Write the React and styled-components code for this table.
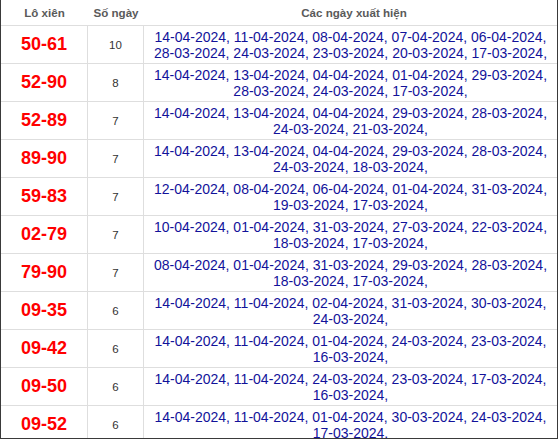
import React from "react";
import styled, { createGlobalStyle } from "styled-components";

const Global = createGlobalStyle`
  html, body { margin: 0; padding: 0; background: #fff; }
  body { font-family: "Liberation Sans", Arial, sans-serif; }
`;

const Frame = styled.div`
  width: 558px;
  height: 439px;
  box-sizing: border-box;
  border: 1px solid #3a3a3a;
  border-top: none;
  overflow: hidden;
  background: #fff;
`;

const Row = styled.div`
  display: grid;
  grid-template-columns: 87px 56px 1fr;
  height: ${(p) => (p.$head ? "26px" : "38px")};
  box-sizing: border-box;
  border-bottom: 1px solid #dedede;
`;

const HeadCell = styled.div`
  display: flex;
  align-items: center;
  justify-content: center;
  font-size: 11.6px;
  font-weight: bold;
  color: #5a5a5a;
  padding-left: ${(p) => (p.$shift ? "7px" : "0")};
`;

const Cell = styled.div`
  display: flex;
  align-items: center;
  justify-content: center;
  box-sizing: border-box;
  border-right: ${(p) => (p.$last ? "none" : "1px solid #dedede")};
  overflow: hidden;
`;

const Pair = styled.span`
  font-size: 18px;
  font-weight: bold;
  color: #ff0000;
`;

const Count = styled.span`
  font-size: 11.5px;
  color: #333;
`;

const Dates = styled.div`
  font-size: 14px;
  line-height: 16px;
  color: #12129a;
  text-align: center;
  padding: 0 4px;
`;

const rows = [
  ["50-61", 10, "14-04-2024, 11-04-2024, 08-04-2024, 07-04-2024, 06-04-2024, 28-03-2024, 24-03-2024, 23-03-2024, 20-03-2024, 17-03-2024,"],
  ["52-90", 8, "14-04-2024, 13-04-2024, 04-04-2024, 01-04-2024, 29-03-2024, 28-03-2024, 24-03-2024, 17-03-2024,"],
  ["52-89", 7, "14-04-2024, 13-04-2024, 04-04-2024, 29-03-2024, 28-03-2024, 24-03-2024, 21-03-2024,"],
  ["89-90", 7, "14-04-2024, 13-04-2024, 04-04-2024, 29-03-2024, 28-03-2024, 24-03-2024, 18-03-2024,"],
  ["59-83", 7, "12-04-2024, 08-04-2024, 06-04-2024, 01-04-2024, 31-03-2024, 19-03-2024, 17-03-2024,"],
  ["02-79", 7, "10-04-2024, 01-04-2024, 31-03-2024, 27-03-2024, 22-03-2024, 18-03-2024, 17-03-2024,"],
  ["79-90", 7, "08-04-2024, 01-04-2024, 31-03-2024, 29-03-2024, 28-03-2024, 18-03-2024, 17-03-2024,"],
  ["09-35", 6, "14-04-2024, 11-04-2024, 02-04-2024, 31-03-2024, 30-03-2024, 24-03-2024,"],
  ["09-42", 6, "14-04-2024, 11-04-2024, 01-04-2024, 24-03-2024, 23-03-2024, 16-03-2024,"],
  ["09-50", 6, "14-04-2024, 11-04-2024, 24-03-2024, 23-03-2024, 17-03-2024, 16-03-2024,"],
  ["09-52", 6, "14-04-2024, 11-04-2024, 01-04-2024, 30-03-2024, 24-03-2024, 17-03-2024,"],
];

export default function App() {
  return (
    <>
      <Global />
      <Frame>
        <Row $head>
          <HeadCell>Lô xiên</HeadCell>
          <HeadCell>Số ngày</HeadCell>
          <HeadCell $shift>Các ngày xuất hiện</HeadCell>
        </Row>
        {rows.map(([pair, n, dates]) => (
          <Row key={pair}>
            <Cell>
              <Pair>{pair}</Pair>
            </Cell>
            <Cell>
              <Count>{n}</Count>
            </Cell>
            <Cell $last>
              <Dates>{dates}</Dates>
            </Cell>
          </Row>
        ))}
      </Frame>
    </>
  );
}
